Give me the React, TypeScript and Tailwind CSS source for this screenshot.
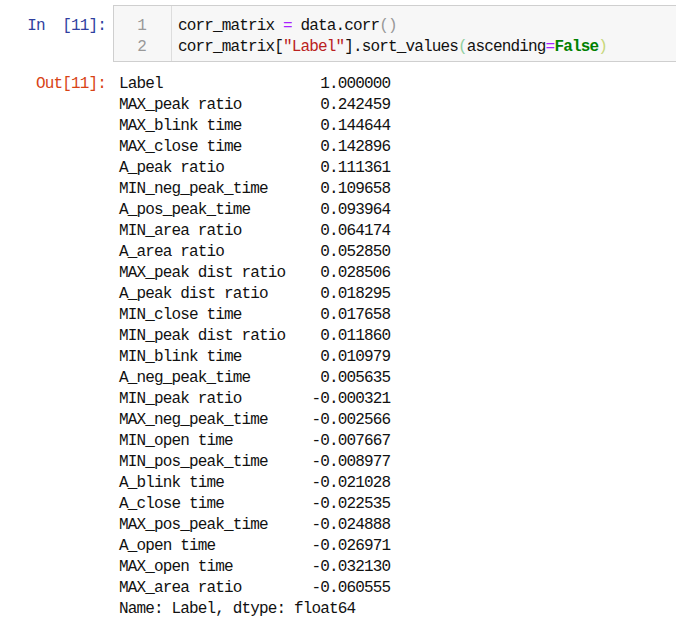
const rows: [string, string][] = [
  ['Label', '1.000000'],
  ['MAX_peak ratio', '0.242459'],
  ['MAX_blink time', '0.144644'],
  ['MAX_close time', '0.142896'],
  ['A_peak ratio', '0.111361'],
  ['MIN_neg_peak_time', '0.109658'],
  ['A_pos_peak_time', '0.093964'],
  ['MIN_area ratio', '0.064174'],
  ['A_area ratio', '0.052850'],
  ['MAX_peak dist ratio', '0.028506'],
  ['A_peak dist ratio', '0.018295'],
  ['MIN_close time', '0.017658'],
  ['MIN_peak dist ratio', '0.011860'],
  ['MIN_blink time', '0.010979'],
  ['A_neg_peak_time', '0.005635'],
  ['MIN_peak ratio', '-0.000321'],
  ['MAX_neg_peak_time', '-0.002566'],
  ['MIN_open time', '-0.007667'],
  ['MIN_pos_peak_time', '-0.008977'],
  ['A_blink time', '-0.021028'],
  ['A_close time', '-0.022535'],
  ['MAX_pos_peak_time', '-0.024888'],
  ['A_open time', '-0.026971'],
  ['MAX_open time', '-0.032130'],
  ['MAX_area ratio', '-0.060555'],
];

const output =
  rows.map(([name, v]) => name.padEnd(19) + '   ' + v.padStart(9)).join('\n') +
  '\nName: Label, dtype: float64';

export default function App() {
  return (
    <div className="h-[621px] w-full overflow-hidden bg-white font-['Liberation_Mono',monospace] text-[16px] leading-[21px] tracking-[-0.85px] text-[#111111]">
      {/* input cell */}
      <div className="mt-[5px] flex">
        <div className="w-[113px] shrink-0 whitespace-pre pr-[7px] pt-[11px] text-right text-[#303F9F]">
          {'In  [11]:'}
        </div>
        <div className="flex h-[57px] flex-1 border border-r-0 border-[#cfcfcf] bg-[#f7f7f7]">
          <div className="w-[58px] shrink-0 border-r border-[#dddddd] pr-[25px] pt-[10px] text-right text-[#999999]">
            <div>1</div>
            <div>2</div>
          </div>
          <div className="whitespace-pre pl-[6px] pt-[10px]">
            <div>
              corr_matrix <span className="text-[#AA22FF]">=</span> data.corr
              <span className="text-[#999999]">()</span>
            </div>
            <div>
              corr_matrix[<span className="text-[#BA2121]">"Label"</span>].sort_values
              <span className="text-[#8fcfa0]">(</span>ascending
              <span className="text-[#AA22FF]">=</span>
              <span className="font-bold text-[#008000]">False</span>
              <span className="text-[#c8d87a]">)</span>
            </div>
          </div>
        </div>
      </div>

      {/* output cell */}
      <div className="mt-[12px] flex">
        <div className="w-[113px] shrink-0 whitespace-pre pr-[7px] text-right text-[#D84315]">
          {'Out[11]:'}
        </div>
        <pre className="pl-[6px] font-['Liberation_Mono',monospace]">{output}</pre>
      </div>
    </div>
  );
}
